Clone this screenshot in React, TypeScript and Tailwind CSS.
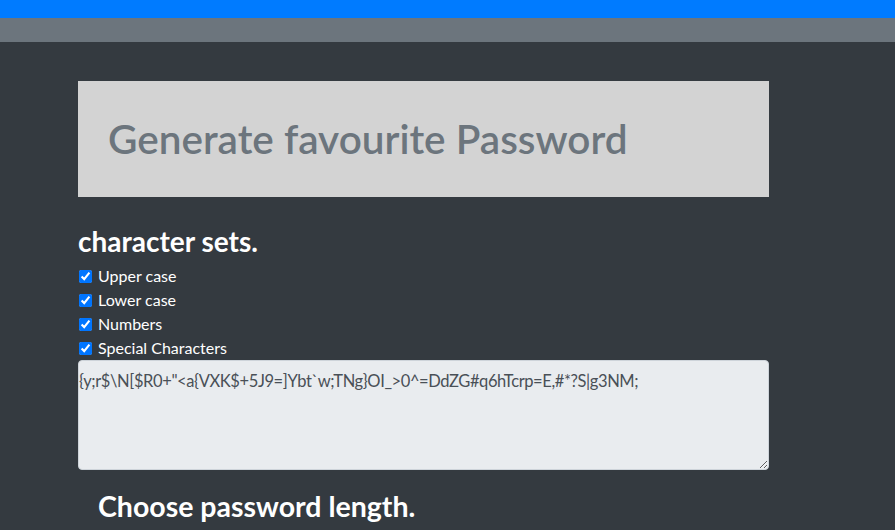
import { useState } from "react";

const SETS = [
    { key: "upper", label: "Upper case" },
    { key: "lower", label: "Lower case" },
    { key: "numbers", label: "Numbers" },
    { key: "special", label: "Special Characters" },
];

export default function App() {
    const [checked, setChecked] = useState<Record<string, boolean>>({
        upper: true,
        lower: true,
        numbers: true,
        special: true,
    });
    const password =
        '{y;r$\\N[$R0+"<a{VXK$+5J9=]Ybt`w;TNg}OI_>0^=DdZG#q6hTcrp=E,#*?S|g3NM;';

    return (
        <div className="min-h-screen bg-[#343a40] font-['Lato','Noto_Sans',sans-serif] text-white">
            <div className="h-[18px] bg-[#007bff]" />
            <div className="h-[24px] bg-[#6c757d]" />

            <div className="ml-[78px] w-[691px] pt-[39px]">
                {/* Title card */}
                <div className="flex h-[116px] items-center bg-[#d3d3d3] px-[30px]">
                    <h1 className="text-[40.5px] font-semibold leading-none text-[#6c757d]">
                        Generate favourite Password
                    </h1>
                </div>

                <h2 className="mt-[28px] text-[28px] font-bold leading-[32px]">
                    character sets.
                </h2>

                <div className="mt-[7px] flex flex-col">
                    {SETS.map(({ key, label }) => (
                        <label key={key} className="flex h-[24px] items-center text-[16px]">
                            <input
                                type="checkbox"
                                checked={checked[key]}
                                onChange={() =>
                                    setChecked((prev) => ({ ...prev, [key]: !prev[key] }))
                                }
                                className="ml-[1px] mr-[6px] h-[13px] w-[13px] accent-[#0075ff]"
                            />
                            {label}
                        </label>
                    ))}
                </div>

                <textarea
                    readOnly
                    value={password}
                    className="block h-[110px] w-full rounded-[4px] border border-[#ced4da] bg-[#e9ecef] px-[0px] pt-[8px] pb-[2px] text-[16.5px] leading-[24px] tracking-[-0.4px] text-[#495057]"
                />

                <h2 className="mt-[20px] pl-[20px] text-[28.5px] font-bold leading-[32px]">
                    Choose password length.
                </h2>
            </div>
        </div>
    );
}
